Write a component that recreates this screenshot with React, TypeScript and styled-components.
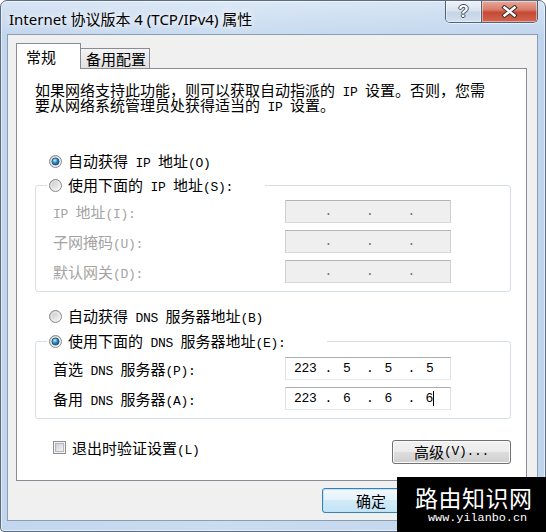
import React from "react";
import styled, { createGlobalStyle } from "styled-components";

const CJK = `"Noto Sans CJK SC", "Noto Sans", sans-serif`;
const MONO = `"Liberation Mono", "DejaVu Sans Mono", monospace`;

const GlobalStyle = createGlobalStyle`
  * { box-sizing: border-box; }
  html, body { margin: 0; padding: 0; background: #ffffff; }
  body { font-family: ${CJK}; font-size: 15px; color: #000; }
`;

const Page = styled.div`
  position: relative;
  width: 546px;
  height: 532px;
  overflow: hidden;
`;

const Window = styled.div`
  width: 546px;
  height: 532px;
  display: flex;
  flex-direction: column;
  padding: 0 7px 10px 6px;
  border: 1px solid #5b6d82;
  border-radius: 7px 7px 4px 4px;
  background:
    linear-gradient(180deg, rgba(255, 255, 255, 0.35) 0px, rgba(255, 255, 255, 0) 34px),
    linear-gradient(90deg, #c2d6ee 0%, #cadcf1 40%, #c0d5ed 100%);
  box-shadow: inset 0 0 0 1px rgba(255, 255, 255, 0.55);
`;

const TitleBar = styled.div`
  flex: none;
  height: 33px;
  display: flex;
  justify-content: space-between;
  align-items: flex-start;
`;

const Title = styled.div`
  margin: 8px 0 0 2px;
  font-family: "Noto Sans", "Noto Sans CJK SC", sans-serif;
  font-size: 15px;
  line-height: 20px;
  color: #000;
  white-space: nowrap;
  text-shadow: 0 0 6px #fff, 0 0 10px rgba(255, 255, 255, 0.8);
`;

const CaptionGroup = styled.div`
  display: flex;
  height: 22px;
  border: 1px solid #4f6278;
  border-top: none;
  border-radius: 0 0 5px 5px;
  overflow: hidden;
  box-shadow: 0 1px 0 rgba(255, 255, 255, 0.6);
`;

const CaptionButton = styled.div<{ $kind: "help" | "close" }>`
  width: ${(p) => (p.$kind === "close" ? 56 : 35)}px;
  display: flex;
  align-items: center;
  justify-content: center;
  background: ${(p) =>
    p.$kind === "close"
      ? "linear-gradient(180deg, #e8a898 0%, #d97f6c 40%, #c64a35 55%, #d26650 100%)"
      : "linear-gradient(180deg, #eef3f9 0%, #d9e3ef 45%, #c5d4e6 55%, #d3dfee 100%)"};
  box-shadow: inset 0 0 0 1px rgba(255, 255, 255, 0.45);
  & + & {
    border-left: 1px solid #4f6278;
  }
`;

const HelpGlyph = styled.span`
  font-family: "Liberation Sans", sans-serif;
  font-weight: bold;
  font-size: 17px;
  line-height: 17px;
  color: #fff;
  text-shadow: 1px 0 0 #3c4a5c, -1px 0 0 #3c4a5c, 0 1px 0 #3c4a5c, 0 -1px 0 #3c4a5c;
`;

const Client = styled.div`
  flex: 1;
  display: flex;
  flex-direction: column;
  background: #f0f0f0;
  border: 1px solid #8c9db2;
  padding: 8px 10px 0 8px;
`;

const TabStrip = styled.div`
  flex: none;
  display: flex;
  align-items: flex-end;
  height: 26px;
  margin-bottom: -1px;
  position: relative;
  z-index: 1;
`;

const Tab = styled.div<{ $active?: boolean; $w: number }>`
  width: ${(p) => p.$w}px;
  height: ${(p) => (p.$active ? 26 : 21)}px;
  margin-left: ${(p) => (p.$active ? 0 : -1)}px;
  padding-left: ${(p) => (p.$active ? 9 : 5)}px;
  display: flex;
  align-items: center;
  border: 1px solid #898c95;
  border-bottom: ${(p) => (p.$active ? "none" : "1px solid #898c95")};
  background: ${(p) => (p.$active ? "#ffffff" : "linear-gradient(180deg, #f4f4f4 0%, #e9e9e9 55%, #e2e2e2 100%)")};
  font-size: 15px;
  line-height: 20px;
  white-space: nowrap;
`;

const Panel = styled.div`
  flex: none;
  height: 413px;
  display: flex;
  flex-direction: column;
  background: #ffffff;
  border: 1px solid #898c95;
  padding: 13px 15px 0 18px;
`;

const Desc = styled.p`
  margin: 0;
  font-size: 15px;
  line-height: 15px;
  white-space: nowrap;
`;

const Latin = styled.span`
  font-family: ${MONO};
  font-size: 13px;
  line-height: 0;
  letter-spacing: -0.3px;
  white-space: pre;
`;

const RadioRow = styled.div<{ $top: number }>`
  display: flex;
  align-items: center;
  gap: 6px;
  height: 20px;
  margin-top: ${(p) => p.$top}px;
  padding-left: 14px;
  line-height: 20px;
  white-space: nowrap;
`;

const Group = styled.fieldset<{ $top: number }>`
  margin: ${(p) => p.$top}px 0 0 0;
  padding: 0 14px 8px 11px;
  border: 1px solid #d5dfe5;
  border-radius: 3px;
  min-width: 0;
`;

const GroupLegend = styled.legend<{ $pr: number }>`
  padding: 0 ${(p) => p.$pr}px 0 2px;
  height: 20px;
  line-height: 20px;
`;

const LegendInner = styled.span`
  display: flex;
  align-items: center;
  gap: 6px;
  height: 20px;
  white-space: nowrap;
`;

const FieldGrid = styled.div<{ $top: number }>`
  display: grid;
  grid-template-columns: 232px 166px;
  row-gap: 7px;
  align-items: center;
  margin: ${(p) => p.$top}px 0 0 6px;
`;

const FieldLabel = styled.div<{ $disabled?: boolean }>`
  line-height: 20px;
  white-space: nowrap;
  color: ${(p) => (p.$disabled ? "#a3a3a3" : "#000")};
`;

const IpBox = styled.div<{ $disabled?: boolean }>`
  height: 23px;
  display: flex;
  align-items: center;
  padding-left: 5px;
  border: 1px solid;
  border-color: ${(p) => (p.$disabled ? "#b5b5b5 #cfcfcf #d8d8d8 #cfcfcf" : "#abadb3 #dbdfe6 #e3e9ef #e2e3ea")};
  background: ${(p) => (p.$disabled ? "#efefef" : "#ffffff")};
  font-family: ${MONO};
  font-size: 13px;
  line-height: 15px;
  letter-spacing: -0.3px;
  color: ${(p) => (p.$disabled ? "#6d6d6d" : "#000")};
`;

const Octet = styled.span`
  width: 28.5px;
  text-align: center;
  white-space: pre;
`;

const Dot = styled.span`
  width: 13px;
  padding-left: 5px;
`;

const Caret = styled.span`
  display: inline-block;
  width: 1px;
  height: 15px;
  background: #000;
  vertical-align: middle;
`;

const FooterRow = styled.div`
  display: flex;
  justify-content: space-between;
  align-items: flex-start;
  width: 476px;
  margin-top: 21px;
  padding-left: 18px;
`;

const CheckLabel = styled.div`
  display: flex;
  align-items: center;
  gap: 6px;
  height: 15px;
  line-height: 15px;
  white-space: nowrap;
`;

const Button = styled.div<{ $default?: boolean; $w: number; $h: number }>`
  width: ${(p) => p.$w}px;
  height: ${(p) => p.$h}px;
  display: flex;
  align-items: center;
  justify-content: center;
  border: 1px solid ${(p) => (p.$default ? "#3c7fb1" : "#707070")};
  border-radius: 3px;
  font-size: 15px;
  line-height: 20px;
  white-space: nowrap;
  background: ${(p) =>
    p.$default
      ? "linear-gradient(180deg, #f2f9fd 0%, #e3f2fb 49%, #d1eaf8 50%, #c4e3f4 100%)"
      : "linear-gradient(180deg, #f2f2f2 0%, #ebebeb 49%, #dddddd 50%, #cfcfcf 100%)"};
  box-shadow: inset 0 0 0 1px ${(p) => (p.$default ? "#b9e4f9" : "#fbfbfb")};
`;

const DialogButtons = styled.div`
  display: flex;
  justify-content: flex-end;
  gap: 9px;
  margin-top: 7px;
`;

const Watermark = styled.div`
  position: absolute;
  right: 0;
  bottom: 0;
  width: 149px;
  height: 55px;
  display: flex;
  flex-direction: column;
  padding-top: 7px;
  background: #000;
  color: #fff;
`;

const WmTitle = styled.div`
  margin-left: 18px;
  font-family: ${CJK};
  font-size: 23px;
  line-height: 26px;
  letter-spacing: 0.5px;
  white-space: nowrap;
`;

const WmUrl = styled.div`
  margin: 1px 0 0 31px;
  font-family: ${MONO};
  font-size: 11.8px;
  line-height: 14px;
  white-space: nowrap;
`;

function Mixed({ text }: { text: string }) {
  const parts = text.split(/([\x20-\x7e]+)/).filter((s) => s.length > 0);
  return (
    <>
      {parts.map((p, i) =>
        /^[\x20-\x7e]+$/.test(p) ? <Latin key={i}>{p}</Latin> : <React.Fragment key={i}>{p}</React.Fragment>
      )}
    </>
  );
}

function Radio({ checked }: { checked?: boolean }) {
  return (
    <svg width="13" height="13" viewBox="0 0 13 13" style={{ flex: "none" }}>
      <defs>
        <linearGradient id="rRing" x1="0" y1="0" x2="1" y2="1">
          <stop offset="0" stopColor="#c4c4c4" />
          <stop offset="1" stopColor="#fafafa" />
        </linearGradient>
        <radialGradient id="rDot" cx="0.4" cy="0.35" r="0.75">
          <stop offset="0" stopColor="#c4f0ff" />
          <stop offset="0.45" stopColor="#2f8fcc" />
          <stop offset="1" stopColor="#0c3a5c" />
        </radialGradient>
      </defs>
      <circle cx="6.5" cy="6.5" r="6" fill="url(#rRing)" stroke="#8a8b8b" />
      <circle cx="6.5" cy="6.5" r="4.3" fill="none" stroke="#ffffff" strokeOpacity="0.6" strokeWidth="0.8" />
      {checked && <circle cx="6.5" cy="6.5" r="3.6" fill="url(#rDot)" stroke="#1b4a6c" strokeWidth="0.7" />}
    </svg>
  );
}

function Checkbox() {
  return (
    <svg width="13" height="13" viewBox="0 0 13 13" style={{ flex: "none" }}>
      <defs>
        <linearGradient id="cbIn" x1="0" y1="0" x2="1" y2="1">
          <stop offset="0" stopColor="#cbcfd5" />
          <stop offset="1" stopColor="#f6f6f6" />
        </linearGradient>
      </defs>
      <rect x="0.5" y="0.5" width="12" height="12" fill="#f4f4f4" stroke="#8e8f8f" />
      <rect x="2.5" y="2.5" width="8" height="8" fill="url(#cbIn)" stroke="#b4b8be" />
    </svg>
  );
}

function CloseGlyph() {
  return (
    <svg width="17" height="13" viewBox="0 0 17 13">
      <path d="M3.5 2.5 L13.5 10.5 M13.5 2.5 L3.5 10.5" stroke="#3d2e2e" strokeWidth="4.4" strokeLinecap="square" />
      <path d="M3.5 2.5 L13.5 10.5 M13.5 2.5 L3.5 10.5" stroke="#ffffff" strokeWidth="2.4" strokeLinecap="square" />
    </svg>
  );
}

function IpField({ octets, disabled, caret }: { octets: string[]; disabled?: boolean; caret?: boolean }) {
  return (
    <IpBox $disabled={disabled}>
      {octets.map((o, i) => (
        <React.Fragment key={i}>
          <Octet>
            {o}
            {caret && i === 3 && <Caret />}
          </Octet>
          {i < 3 && <Dot>.</Dot>}
        </React.Fragment>
      ))}
    </IpBox>
  );
}

export default function App() {
  const empty = ["", "", "", ""];
  return (
    <Page>
      <GlobalStyle />
      <Window>
        <TitleBar>
          <Title>Internet 协议版本 4 (TCP/IPv4) 属性</Title>
          <CaptionGroup>
            <CaptionButton $kind="help">
              <HelpGlyph>?</HelpGlyph>
            </CaptionButton>
            <CaptionButton $kind="close">
              <CloseGlyph />
            </CaptionButton>
          </CaptionGroup>
        </TitleBar>
        <Client>
          <TabStrip>
            <Tab $active $w={65}>常规</Tab>
            <Tab $w={70}>备用配置</Tab>
          </TabStrip>
          <Panel>
            <Desc>
              <Mixed text="如果网络支持此功能，则可以获取自动指派的 IP 设置。否则，您需" />
              <br />
              <Mixed text="要从网络系统管理员处获得适当的 IP 设置。" />
            </Desc>

            <RadioRow $top={39}>
              <Radio checked />
              <span>
                <Mixed text="自动获得 IP 地址(O)" />
              </span>
            </RadioRow>

            <Group $top={4}>
              <GroupLegend $pr={32}>
                <LegendInner>
                  <Radio />
                  <span>
                    <Mixed text="使用下面的 IP 地址(S):" />
                  </span>
                </LegendInner>
              </GroupLegend>
              <FieldGrid $top={5}>
                <FieldLabel $disabled>
                  <Mixed text="IP 地址(I):" />
                </FieldLabel>
                <IpField octets={empty} disabled />
                <FieldLabel $disabled>
                  <Mixed text="子网掩码(U):" />
                </FieldLabel>
                <IpField octets={empty} disabled />
                <FieldLabel $disabled>
                  <Mixed text="默认网关(D):" />
                </FieldLabel>
                <IpField octets={empty} disabled />
              </FieldGrid>
            </Group>

            <RadioRow $top={14}>
              <Radio />
              <span>
                <Mixed text="自动获得 DNS 服务器地址(B)" />
              </span>
            </RadioRow>

            <Group $top={5}>
              <GroupLegend $pr={41}>
                <LegendInner>
                  <Radio checked />
                  <span>
                    <Mixed text="使用下面的 DNS 服务器地址(E):" />
                  </span>
                </LegendInner>
              </GroupLegend>
              <FieldGrid $top={6}>
                <FieldLabel>
                  <Mixed text="首选 DNS 服务器(P):" />
                </FieldLabel>
                <IpField octets={["223", "5", "5", "5"]} />
                <FieldLabel>
                  <Mixed text="备用 DNS 服务器(A):" />
                </FieldLabel>
                <IpField octets={["223", "6", "6", "6"]} caret />
              </FieldGrid>
            </Group>

            <FooterRow>
              <CheckLabel>
                <Checkbox />
                <span>
                  <Mixed text="退出时验证设置(L)" />
                </span>
              </CheckLabel>
              <Button $w={119} $h={24}>
                <Mixed text="高级(V)..." />
              </Button>
            </FooterRow>
          </Panel>
          <DialogButtons>
            <Button $default $w={98} $h={25}>确定</Button>
            <Button $w={98} $h={25}>取消</Button>
          </DialogButtons>
        </Client>
      </Window>
      <Watermark>
        <WmTitle>路由知识网</WmTitle>
        <WmUrl>www.yilanbo.cn</WmUrl>
      </Watermark>
    </Page>
  );
}
